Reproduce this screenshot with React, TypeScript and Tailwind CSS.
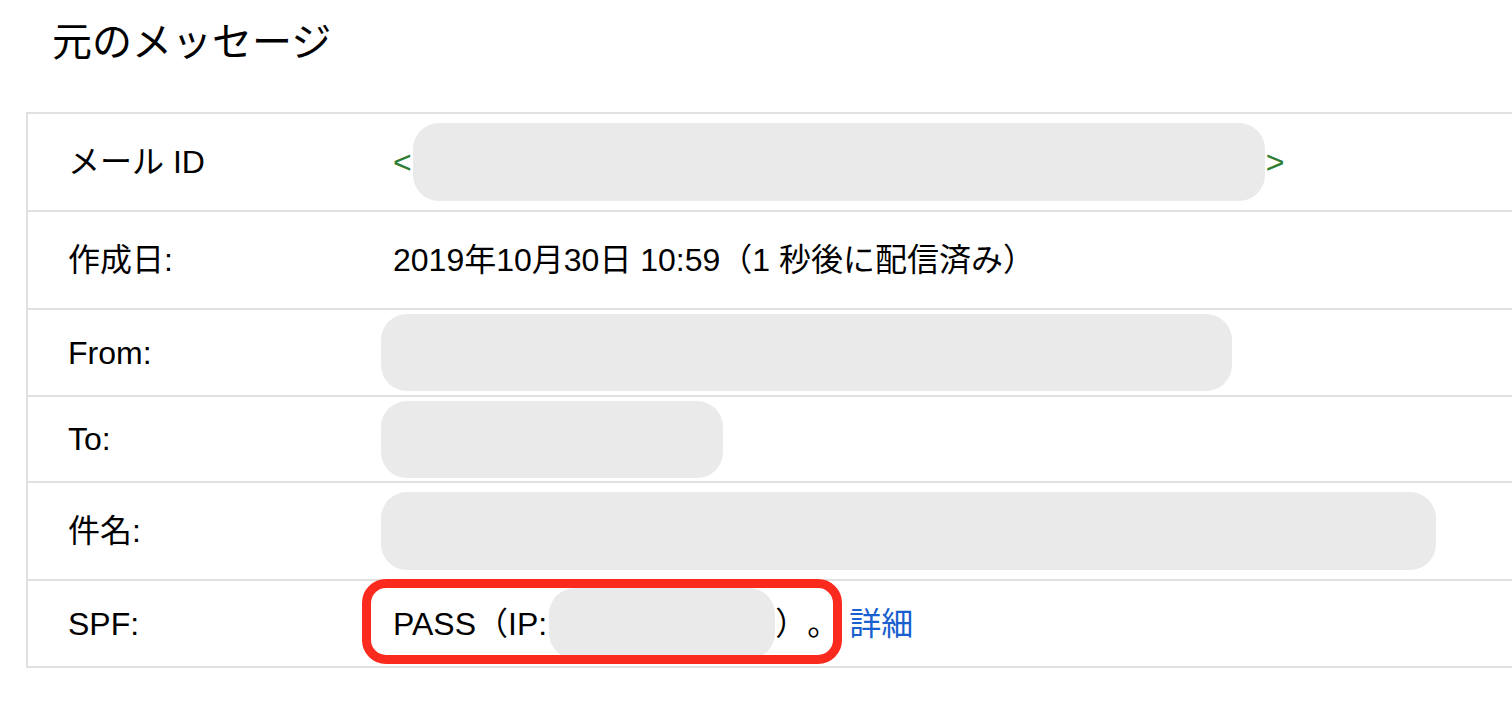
import React from "react";

const Row = ({
  label,
  h,
  children,
  last,
}: {
  label: string;
  h: string;
  children?: React.ReactNode;
  last?: boolean;
}) => (
  <div className={`flex items-center ${h} ${last ? "" : "border-b-2 border-[#e0e0e0]"}`}>
    <div className="w-[353px] shrink-0 pl-[40px]">{label}</div>
    <div className="relative flex h-full flex-1 items-center">{children}</div>
  </div>
);

export default function App() {
  return (
    <div className="h-[708px] w-[1512px] overflow-hidden bg-white font-['Liberation_Sans','Noto_Sans_CJK_JP',sans-serif] text-[32px] text-black [text-spacing-trim:space-all]">
      <div className="h-[112px] pl-[52px] pt-[22px]">
        <h1 className="text-[40px] leading-none font-normal">元のメッセージ</h1>
      </div>
      <div className="ml-[26px] border-2 border-r-0 border-[#e0e0e0]">
        <Row label="メール ID" h="h-[98px]">
          <div className="flex items-center pl-[12px] text-[#2e7d32]">
            <span>&lt;</span>
            <span className="mx-[1px] h-[78px] w-[852px] rounded-[26px] bg-[#eaeaea]" />
            <span>&gt;</span>
          </div>
        </Row>
        <Row label="作成日:" h="h-[98px]">
          <span className="pl-[12px]">2019年10月30日 10:59（1 秒後に配信済み）</span>
        </Row>
        <Row label="From:" h="h-[87px]">
          <span className="h-[77px] w-[851px] rounded-[26px] bg-[#eaeaea]" />
        </Row>
        <Row label="To:" h="h-[86px]">
          <span className="h-[77px] w-[342px] rounded-[26px] bg-[#eaeaea]" />
        </Row>
        <Row label="件名:" h="h-[98px]">
          <span className="h-[78px] w-[1055px] rounded-[26px] bg-[#eaeaea]" />
        </Row>
        <Row label="SPF:" h="h-[85px]" last>
          <div className="flex items-center pl-[12px]">
            <span>PASS（IP:</span>
            <span className="ml-[2px] h-[71px] w-[226px] rounded-[26px] bg-[#eaeaea]" />
            <span className="w-[32px]">）</span>
            <span className="w-[32px]">。</span>
            <a className="ml-[10px] text-[#1a5fd0]" href="#">詳細</a>
          </div>
          <div className="pointer-events-none absolute left-[-19px] top-[-2px] h-[85px] w-[480px] rounded-[24px] border-[9px] border-[#fb2a1e]" />
        </Row>
      </div>
    </div>
  );
}
